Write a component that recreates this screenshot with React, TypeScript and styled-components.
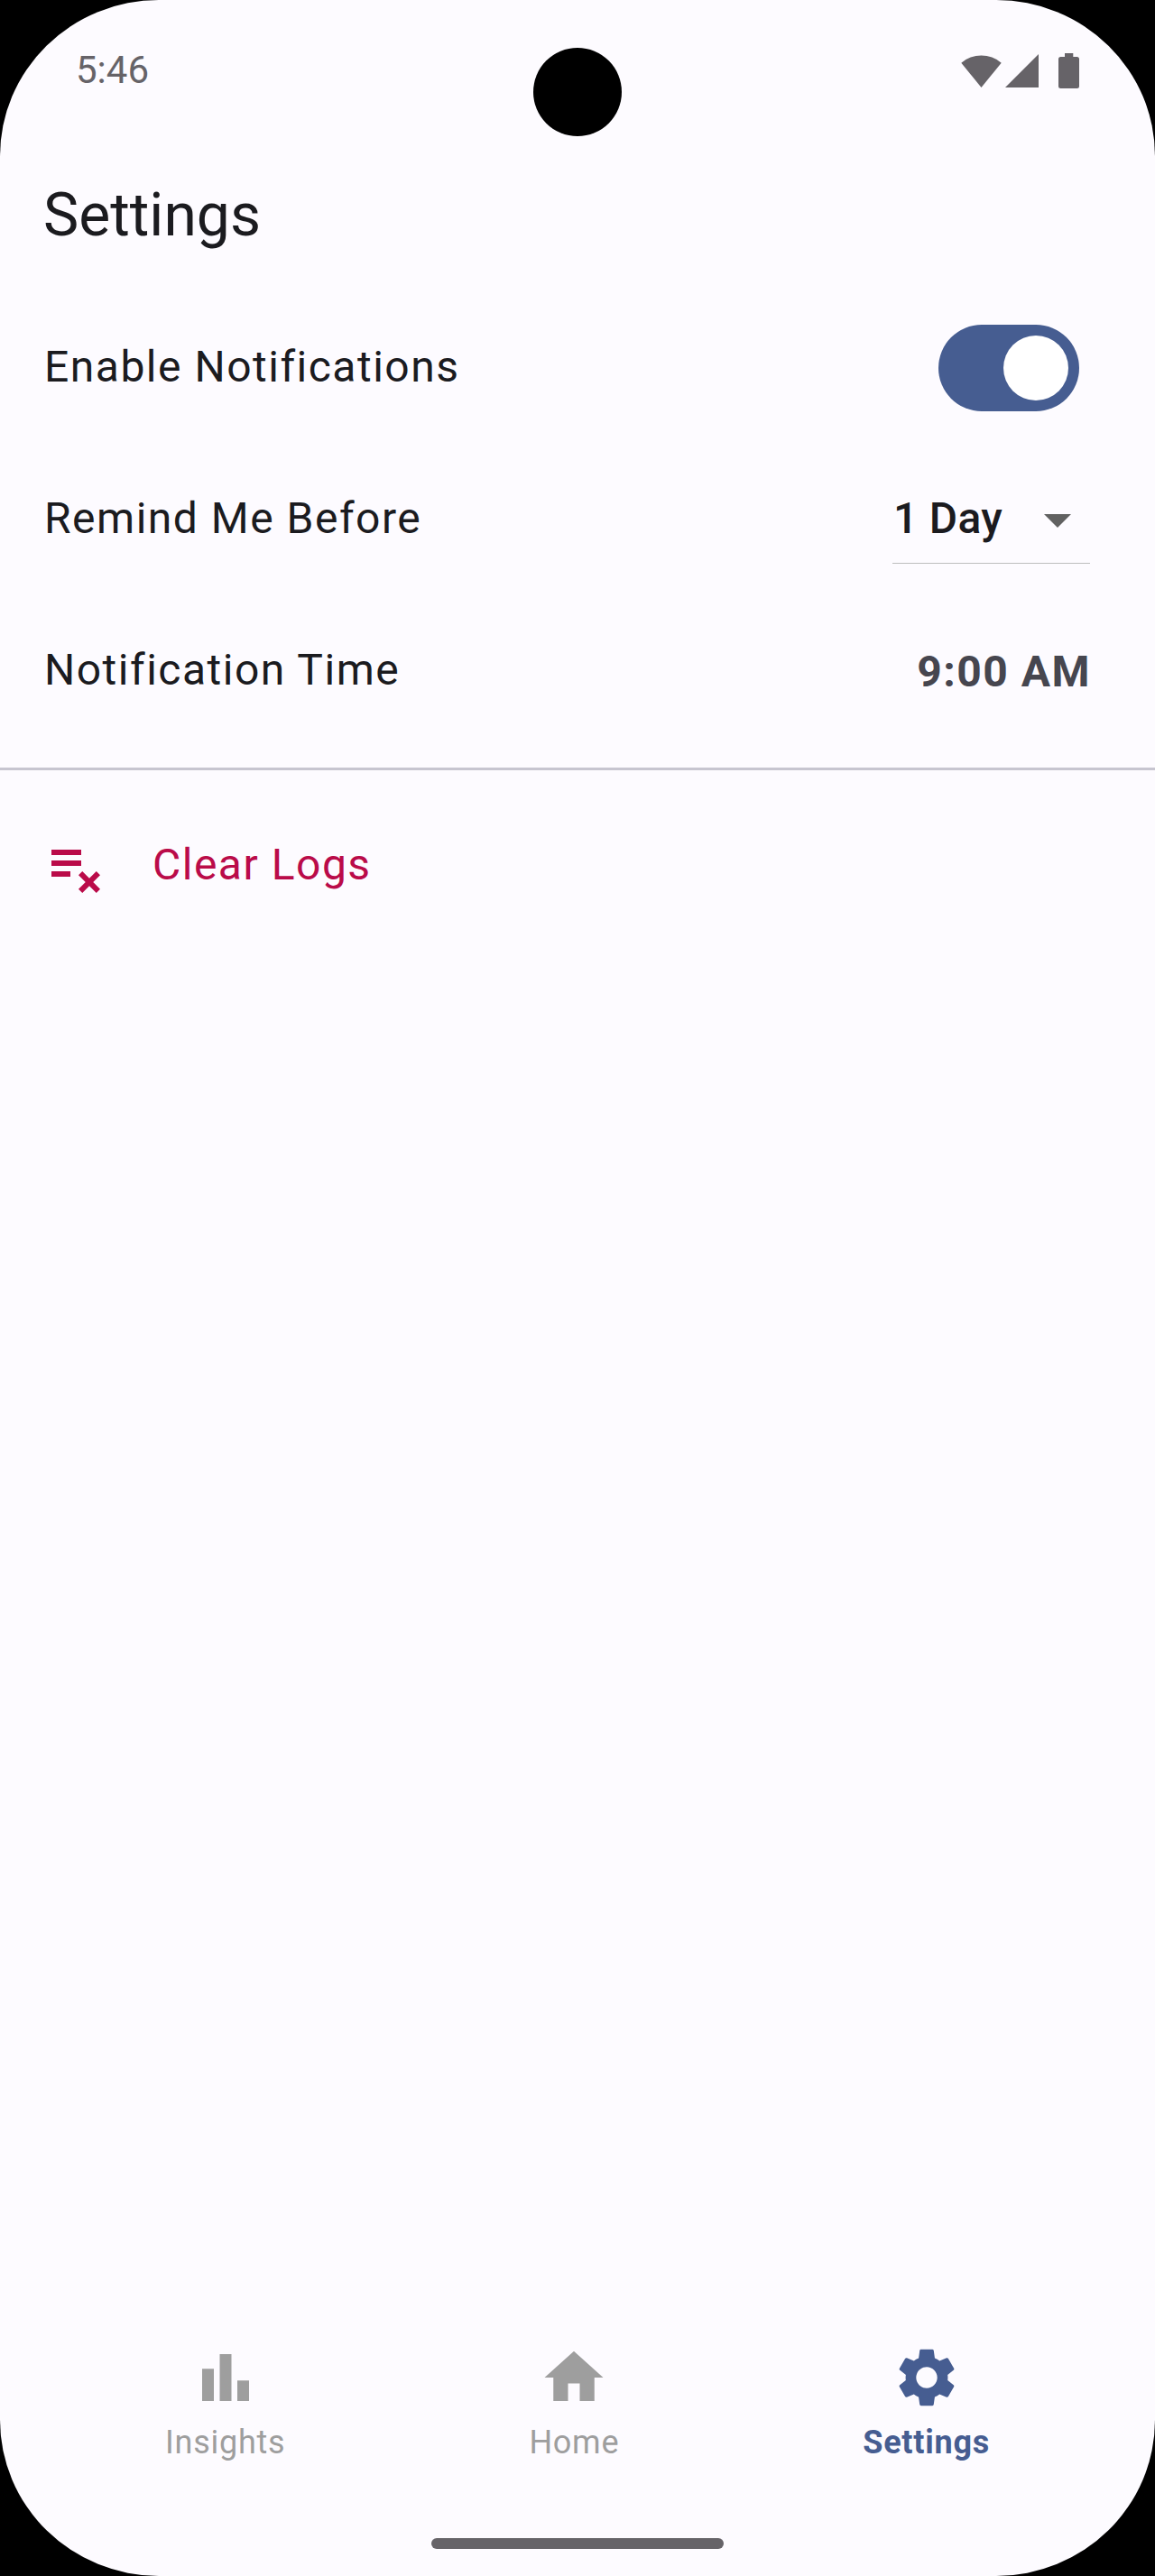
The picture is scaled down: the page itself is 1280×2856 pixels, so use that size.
import React from "react";
import styled, { createGlobalStyle } from "styled-components";
import {
  MdArrowDropDown,
  MdBarChart,
  MdHome,
  MdPlaylistRemove,
  MdSettings,
} from "react-icons/md";

const GlobalStyle = createGlobalStyle`
  *, *::before, *::after { box-sizing: border-box; }
  html, body { margin: 0; background: #000; }
`;

const Screen = styled.div`
  position: relative;
  display: flex;
  flex-direction: column;
  width: 1280px;
  height: 2856px;
  overflow: hidden;
  border-radius: 176px / 173px;
  background: #fdfbff;
  color: #1b1b1f;
  font-family: Roboto, sans-serif;
`;

const CameraHole = styled.div`
  position: absolute;
  top: 53px;
  left: 591px;
  width: 98px;
  height: 98px;
  border-radius: 50%;
  background: #000;
`;

const StatusBar = styled.header`
  display: flex;
  flex: none;
  align-items: center;
  justify-content: space-between;
  height: 156px;
  padding: 0 84px 0 84px;
  color: #666368;
`;

const Clock = styled.span`
  font-size: 42px;
  line-height: 48px;
`;

const StatusIcons = styled.svg`
  display: block;
  width: 131px;
  height: 39px;
  fill: #666368;
`;

const Title = styled.h1`
  flex: none;
  height: 168px;
  margin: 0;
  padding-left: 48px;
  font-size: 66px;
  font-weight: 400;
  line-height: 165px;
`;

const Row = styled.div`
  display: flex;
  flex: none;
  align-items: center;
  justify-content: space-between;
  height: 168px;
  padding: 0 72px 0 48px;
`;

const Label = styled.span`
  padding: 0 0 3px 1px;
  font-size: 48px;
  line-height: 71px;
  letter-spacing: 1.5px;
`;

const Toggle = styled.button`
  display: flex;
  align-items: center;
  justify-content: flex-end;
  width: 156px;
  height: 96px;
  margin: 0 12px 0 0;
  padding: 12px;
  border: 0;
  border-radius: 48px;
  background: #465d91;
`;

const Knob = styled.span`
  width: 72px;
  height: 72px;
  border-radius: 50%;
  background: #fff;
`;

const Select = styled.div`
  display: flex;
  align-items: center;
  justify-content: space-between;
  width: 219px;
  height: 98px;
  border-bottom: 1px solid #bdbdbd;
  svg { display: block; margin-top: 1px; color: #616161; }
`;

const SelectValue = styled.span`
  padding: 0 0 2px 1px;
  color: #1b1b1f;
  font-size: 48px;
  font-weight: 500;
  line-height: 71px;
  letter-spacing: 0.3px;
`;

const Time = styled.span`
  margin-right: -1px;
  padding-top: 1px;
  color: #46464f;
  font-size: 48px;
  font-weight: 700;
  line-height: 71px;
  letter-spacing: 1.5px;
`;

const Divider = styled.hr`
  flex: none;
  width: 100%;
  height: 3px;
  margin: 23px 0 22px;
  border: 0;
  background: #c7c5d0;
`;

const ClearRow = styled.button`
  display: flex;
  flex: none;
  align-items: center;
  gap: 48px;
  height: 168px;
  padding: 0 48px;
  border: 0;
  background: none;
  color: #ba0b49;
  font-family: inherit;
  svg { display: block; }
`;

const Spacer = styled.div`
  flex: 1;
`;

const Nav = styled.nav`
  display: flex;
  flex: none;
  justify-content: space-around;
  height: 217px;
  padding: 0 48px;
`;

const NavItem = styled.div<{ $active?: boolean }>`
  display: flex;
  flex-direction: column;
  align-items: center;
  color: ${(p) => (p.$active ? "#465d91" : "#9e9e9e")};
  font-size: 36px;
  font-weight: ${(p) => (p.$active ? 700 : 400)};
  line-height: 48px;
  letter-spacing: 0.75px;
  svg { display: block; margin-bottom: 9px; }
`;

const HomeIndicator = styled.div`
  flex: none;
  align-self: center;
  width: 324px;
  height: 12px;
  margin-bottom: 30px;
  border-radius: 6px;
  background: #666368;
`;

export default function App() {
  return (
    <>
      <GlobalStyle />
      <Screen>
        <CameraHole />
        <StatusBar>
          <Clock>5:46</Clock>
          <StatusIcons viewBox="0 0 131 39">
            <path d="M0.3 10.7A34 34 0 0 1 44.7 10.7L22.5 38Z" />
            <path d="M86 1V38H49Z" />
            <path d="M115 0h9.3v4h4.2a2.5 2.5 0 0 1 2.5 2.5v30a2.5 2.5 0 0 1-2.5 2.5h-18a2.5 2.5 0 0 1-2.5-2.5v-30a2.5 2.5 0 0 1 2.5-2.5h4.5z" />
          </StatusIcons>
        </StatusBar>
        <Title>Settings</Title>
        <Row>
          <Label>Enable Notifications</Label>
          <Toggle aria-label="Enable Notifications">
            <Knob />
          </Toggle>
        </Row>
        <Row>
          <Label>Remind Me Before</Label>
          <Select>
            <SelectValue>1 Day</SelectValue>
            <MdArrowDropDown size={72} />
          </Select>
        </Row>
        <Row>
          <Label>Notification Time</Label>
          <Time>9:00 AM</Time>
        </Row>
        <Divider />
        <ClearRow>
          <MdPlaylistRemove size={72} />
          <Label>Clear Logs</Label>
        </ClearRow>
        <Spacer />
        <Nav>
          <NavItem>
            <MdBarChart size={78} />
            Insights
          </NavItem>
          <NavItem>
            <MdHome size={78} />
            Home
          </NavItem>
          <NavItem $active>
            <MdSettings size={78} />
            Settings
          </NavItem>
        </Nav>
        <HomeIndicator />
      </Screen>
    </>
  );
}
